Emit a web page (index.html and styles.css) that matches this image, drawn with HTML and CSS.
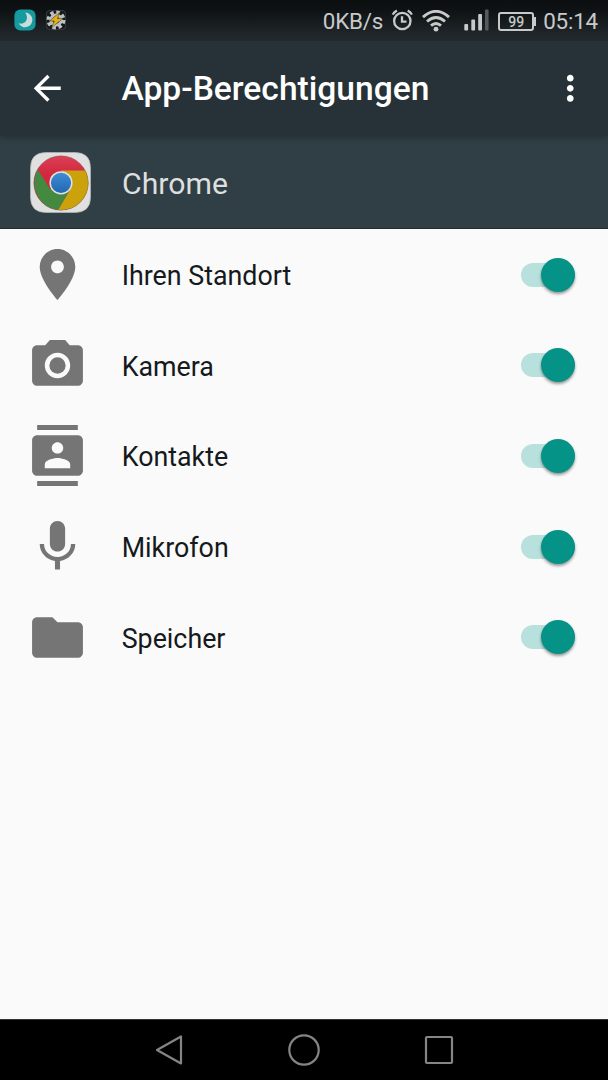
FILE: index.html
```html
<!DOCTYPE html>
<html lang="de">
<head>
<meta charset="UTF-8">
<meta name="viewport" content="width=device-width, initial-scale=1.0">
<title>App-Berechtigungen</title>
<link rel="stylesheet" href="styles.css">
</head>
<body>
<div class="status-bar">
    <svg class="moon" width="22" height="22" viewBox="0 0 22 22">
        <rect x="0.4" y="0.4" width="21.2" height="21.2" rx="6" fill="#159a9f"/>
        <path d="M11.2 3.6A7.300 7.300 0 1 1 4.600 14.200C11.500 16.500 15.500 9.500 11.200 3.600Z" fill="#c9dddc"/>
    </svg>
    <svg class="gear" width="20" height="20" viewBox="0 0 20 20">
        <rect x="0.3" y="0.3" width="19.4" height="19.4" rx="4" fill="#141819" stroke="#555b5c" stroke-width="0.6"/>
        <circle cx="10" cy="10" r="7.8" fill="none" stroke="#b9c1c2" stroke-width="3.4" stroke-dasharray="3.5 2.63"/>
        <circle cx="10" cy="10" r="6.6" fill="#b9c1c2"/>
        <circle cx="10" cy="10" r="3.6" fill="#454b4d"/>
        <path d="M13.500 2.500L3.500 11H8.300L5.500 17.500L17 8.500H11.500Z" fill="#e5ad16" stroke="#3a3624" stroke-width="0.5"/>
    </svg>
    <span class="speed">0KB/s</span>
    <svg class="alarm" width="22" height="22" viewBox="0 0 22 22" fill="none" stroke="#c8c9c9" stroke-width="2.3">
        <circle cx="11.3" cy="12" r="8.2"/>
        <path d="M11 7.200V12.600H15.500"/>
        <path d="M1.700 5.600Q2.900 2.900 5.900 1.600M20.900 5.600Q19.700 2.900 16.700 1.600"/>
    </svg>
    <svg class="wifi" width="28" height="22" viewBox="0 0 28 22" fill="none" stroke="#c8c9c9" stroke-width="2.9">
        <path d="M1 7.2Q14 -4.5 27 7.2M5 11.5Q14 3.6 23 11.5M9 15.6Q14 11.2 19 15.6"/>
        <circle cx="14" cy="19.2" r="2.4" fill="#c8c9c9" stroke="none"/>
    </svg>
    <svg class="signal" width="26" height="22" viewBox="0 0 26 22" fill="#c8c9c9">
        <rect x="0.3" y="15" width="3.8" height="6.4" rx="1"/>
        <rect x="7.3" y="10.5" width="3.8" height="10.9" rx="1"/>
        <rect x="14.2" y="5" width="3.8" height="16.4" rx="1"/>
        <rect x="21" y="0.5" width="3.6" height="20.9" rx="1" fill="#555a5c"/>
    </svg>
    <div class="battery">99</div>
    <span class="clock">05:14</span>
</div>

<div class="action-bar">
    <svg class="back" viewBox="0 0 24 24"><path d="M20 11H7.83l5.59-5.59L12 4l-8 8 8 8 1.41-1.41L7.83 13H20v-2z"/></svg>
    <h1>App-Berechtigungen</h1>
    <svg class="more" viewBox="0 0 24 24"><path d="M12 8c1.1 0 2-.9 2-2s-.9-2-2-2-2 .9-2 2 .9 2 2 2zm0 2c-1.1 0-2 .9-2 2s.9 2 2 2 2-.9 2-2-.9-2-2-2zm0 6c-1.1 0-2 .9-2 2s.9 2 2 2 2-.9 2-2-.9-2-2-2z"/></svg>
</div>

<div class="app-header">
    <svg width="61" height="61" viewBox="0 0 61 61">
        <defs>
            <linearGradient id="red" x1="0" y1="0" x2="0" y2="1"><stop offset="0" stop-color="#db4057"/><stop offset="0.35" stop-color="#d3273d"/></linearGradient>
            <linearGradient id="blue" x1="0" y1="0" x2="0" y2="1"><stop offset="0" stop-color="#3f8dd2"/><stop offset="1" stop-color="#2267b4"/></linearGradient>
        </defs>
        <path d="M16 .5H45Q60.500 .5 60.500 16V45Q60.500 60.500 45 60.500H16Q.5 60.500 .5 45V16Q.5 .5 16 .5Z" fill="#dfe0df" stroke="#b5babb" stroke-width="0.7"/>
        <circle cx="31" cy="31" r="27.3" fill="url(#red)"/>
        <path d="M31 18.500H55.500A27.300 27.300 0 0 1 28 58L41 36Z" fill="#cba20b"/>
        <path d="M7.800 17.500L20 37L41 36L28 58A27.300 27.300 0 0 1 7.800 17.500Z" fill="#43893f"/>
        <circle cx="31" cy="31" r="27.200" fill="none" stroke="#686b64" stroke-opacity="0.55" stroke-width="0.7"/>
        <circle cx="31" cy="30.800" r="11.600" fill="#dfe2e2"/>
        <circle cx="31" cy="30.800" r="10.100" fill="url(#blue)"/>
    </svg>
    <span>Chrome</span>
</div>

<div class="permissions">
    <div class="permission">
        <svg viewBox="0 0 24 24"><path d="M12 2C8.13 2 5 5.13 5 9c0 5.25 7 13 7 13s7-7.75 7-13c0-3.870-3.130-7-7-7zm0 9.500c-1.380 0-2.500-1.120-2.500-2.500s1.120-2.500 2.500-2.500 2.500 1.120 2.500 2.500-1.120 2.500-2.500 2.500z"/></svg>
        <span>Ihren Standort</span>
        <div class="switch"></div>
    </div>
    <div class="permission">
        <svg viewBox="0 0 24 24"><circle cx="12" cy="12" r="3.200"/><path d="M9 2L7.170 4H4c-1.100 0-2 .9-2 2v12c0 1.100.9 2 2 2h16c1.100 0 2-.9 2-2V6c0-1.100-.9-2-2-2h-3.170L15 2H9zm3 15c-2.760 0-5-2.240-5-5s2.240-5 5-5 5 2.240 5 5-2.240 5-5 5z"/></svg>
        <span>Kamera</span>
        <div class="switch"></div>
    </div>
    <div class="permission">
        <svg viewBox="0 0 24 24"><path d="M20 0H4v2h16V0zM4 24h16v-2H4v2zM20 4H4c-1.100 0-2 .9-2 2v12c0 1.100.9 2 2 2h16c1.100 0 2-.9 2-2V6c0-1.100-.9-2-2-2zm-8 2.750c1.240 0 2.250 1.010 2.250 2.250s-1.010 2.250-2.250 2.250S9.750 10.240 9.750 9 10.760 6.750 12 6.750zM17 17H7v-1.500c0-1.670 3.330-2.500 5-2.500s5 .83 5 2.500V17z"/></svg>
        <span>Kontakte</span>
        <div class="switch"></div>
    </div>
    <div class="permission">
        <svg viewBox="0 0 24 24"><path d="M12 14c1.660 0 3-1.340 3-3V5c0-1.660-1.340-3-3-3S9 3.340 9 5v6c0 1.660 1.340 3 3 3zm5.300-3c0 3-2.540 5.100-5.300 5.100S6.700 14 6.700 11H5c0 3.410 2.720 6.230 6 6.720V21h2v-3.280c3.280-.48 6-3.300 6-6.720h-1.700z"/></svg>
        <span>Mikrofon</span>
        <div class="switch"></div>
    </div>
    <div class="permission">
        <svg viewBox="0 0 24 24"><path d="M10 4H4c-1.100 0-2 .9-2 2v12c0 1.100.9 2 2 2h16c1.100 0 2-.9 2-2V8c0-1.100-.9-2-2-2h-8l-2-2z"/></svg>
        <span>Speicher</span>
        <div class="switch"></div>
    </div>
</div>

<div class="nav-bar">
    <svg width="32" height="32" viewBox="0 0 32 32"><path d="M4 16L28 2.500V29.500Z"/></svg>
    <svg width="32" height="32" viewBox="0 0 32 32"><circle cx="16" cy="16" r="14.700"/></svg>
    <svg width="32" height="32" viewBox="0 0 32 32"><rect x="3" y="3" width="26" height="26" rx="1"/></svg>
</div>
</body>
</html>
```
FILE: styles.css
```css
* {
    box-sizing: border-box;
}
body {
    margin: 0;
    height: 1080px;
    display: flex;
    flex-direction: column;
    overflow: hidden;
    font-family: Roboto, sans-serif;
    background-color: #fafafa;
}
svg {
    display: block;
    flex: none;
}
.status-bar {
    height: 41px;
    display: flex;
    align-items: center;
    padding: 0 10px 0 14px;
    background: linear-gradient(#0b0f10, #0e1214 25%, #232a2e);
    border-bottom: 1px solid #222c31;
    color: #c8c9c9;
    font-size: 22.4px;
    letter-spacing: -0.2px;
    white-space: nowrap;
}
.gear {
    margin-left: 10px;
}
.speed {
    margin-left: auto;
    margin-top: 2px;
}
.alarm {
    margin-left: 8px;
}
.wifi {
    margin-left: 9px;
    margin-top: 1px;
}
.signal {
    margin-left: 14px;
}
.battery {
    position: relative;
    width: 36px;
    height: 19px;
    margin-left: 8px;
    margin-top: 2px;
    border: 2px solid #c8c9c9;
    border-radius: 3px;
    font-size: 14px;
    font-weight: 500;
    letter-spacing: 0;
    line-height: 16px;
    text-align: center;
}
.battery::after {
    content: "";
    position: absolute;
    right: -4px;
    top: 3px;
    width: 2px;
    height: 9px;
    background-color: #c8c9c9;
}
.clock {
    margin-left: 9px;
    margin-top: 2px;
}
.action-bar {
    position: relative;
    height: 95px;
    display: flex;
    align-items: center;
    padding: 0 17.5px 1px 27px;
    background-color: #263238;
    box-shadow: 0 2px 5px rgba(0, 0, 0, 0.2);
}
.action-bar svg {
    width: 40.5px;
    height: 40.5px;
    fill: #fff;
}
.action-bar h1 {
    flex: 1;
    margin: 2px 0 0 54px;
    color: #fff;
    font-size: 33.6px;
    font-weight: 500;
    line-height: 40px;
}
.app-header {
    height: 93px;
    display: flex;
    align-items: center;
    gap: 31px;
    padding-left: 30px;
    background-color: #303e45;
    border-bottom: 1px solid #202b32;
    color: #dedfdf;
    font-size: 30.2px;
}
.app-header span {
    margin-top: 3px;
}
.permissions {
    flex: 1;
    padding-top: 0.5px;
}
.permission {
    height: 90.6px;
    display: flex;
    align-items: center;
    padding: 0 33px 0 27px;
    color: #15191c;
    font-size: 26.8px;
}
.permission svg {
    width: 61px;
    height: 61px;
    fill: #757575;
}
.permission span {
    flex: 1;
    margin: 3px 0 0 33.7px;
}
.switch {
    display: flex;
    align-items: center;
    justify-content: flex-end;
    width: 54px;
    height: 24px;
    border-radius: 12px;
    background-color: #b8e0dc;
}
.switch::after {
    content: "";
    flex: none;
    width: 34px;
    height: 34px;
    border-radius: 50%;
    background-color: #049386;
    box-shadow: 0 2px 3px rgba(0, 0, 0, 0.4);
}
.nav-bar {
    height: 61px;
    display: flex;
    align-items: center;
    justify-content: center;
    gap: 103px;
    background-color: #000;
    border-top: 1px solid #333;
}
.nav-bar svg {
    fill: none;
    stroke: #858585;
    stroke-width: 2.2;
    stroke-linejoin: round;
}
```
